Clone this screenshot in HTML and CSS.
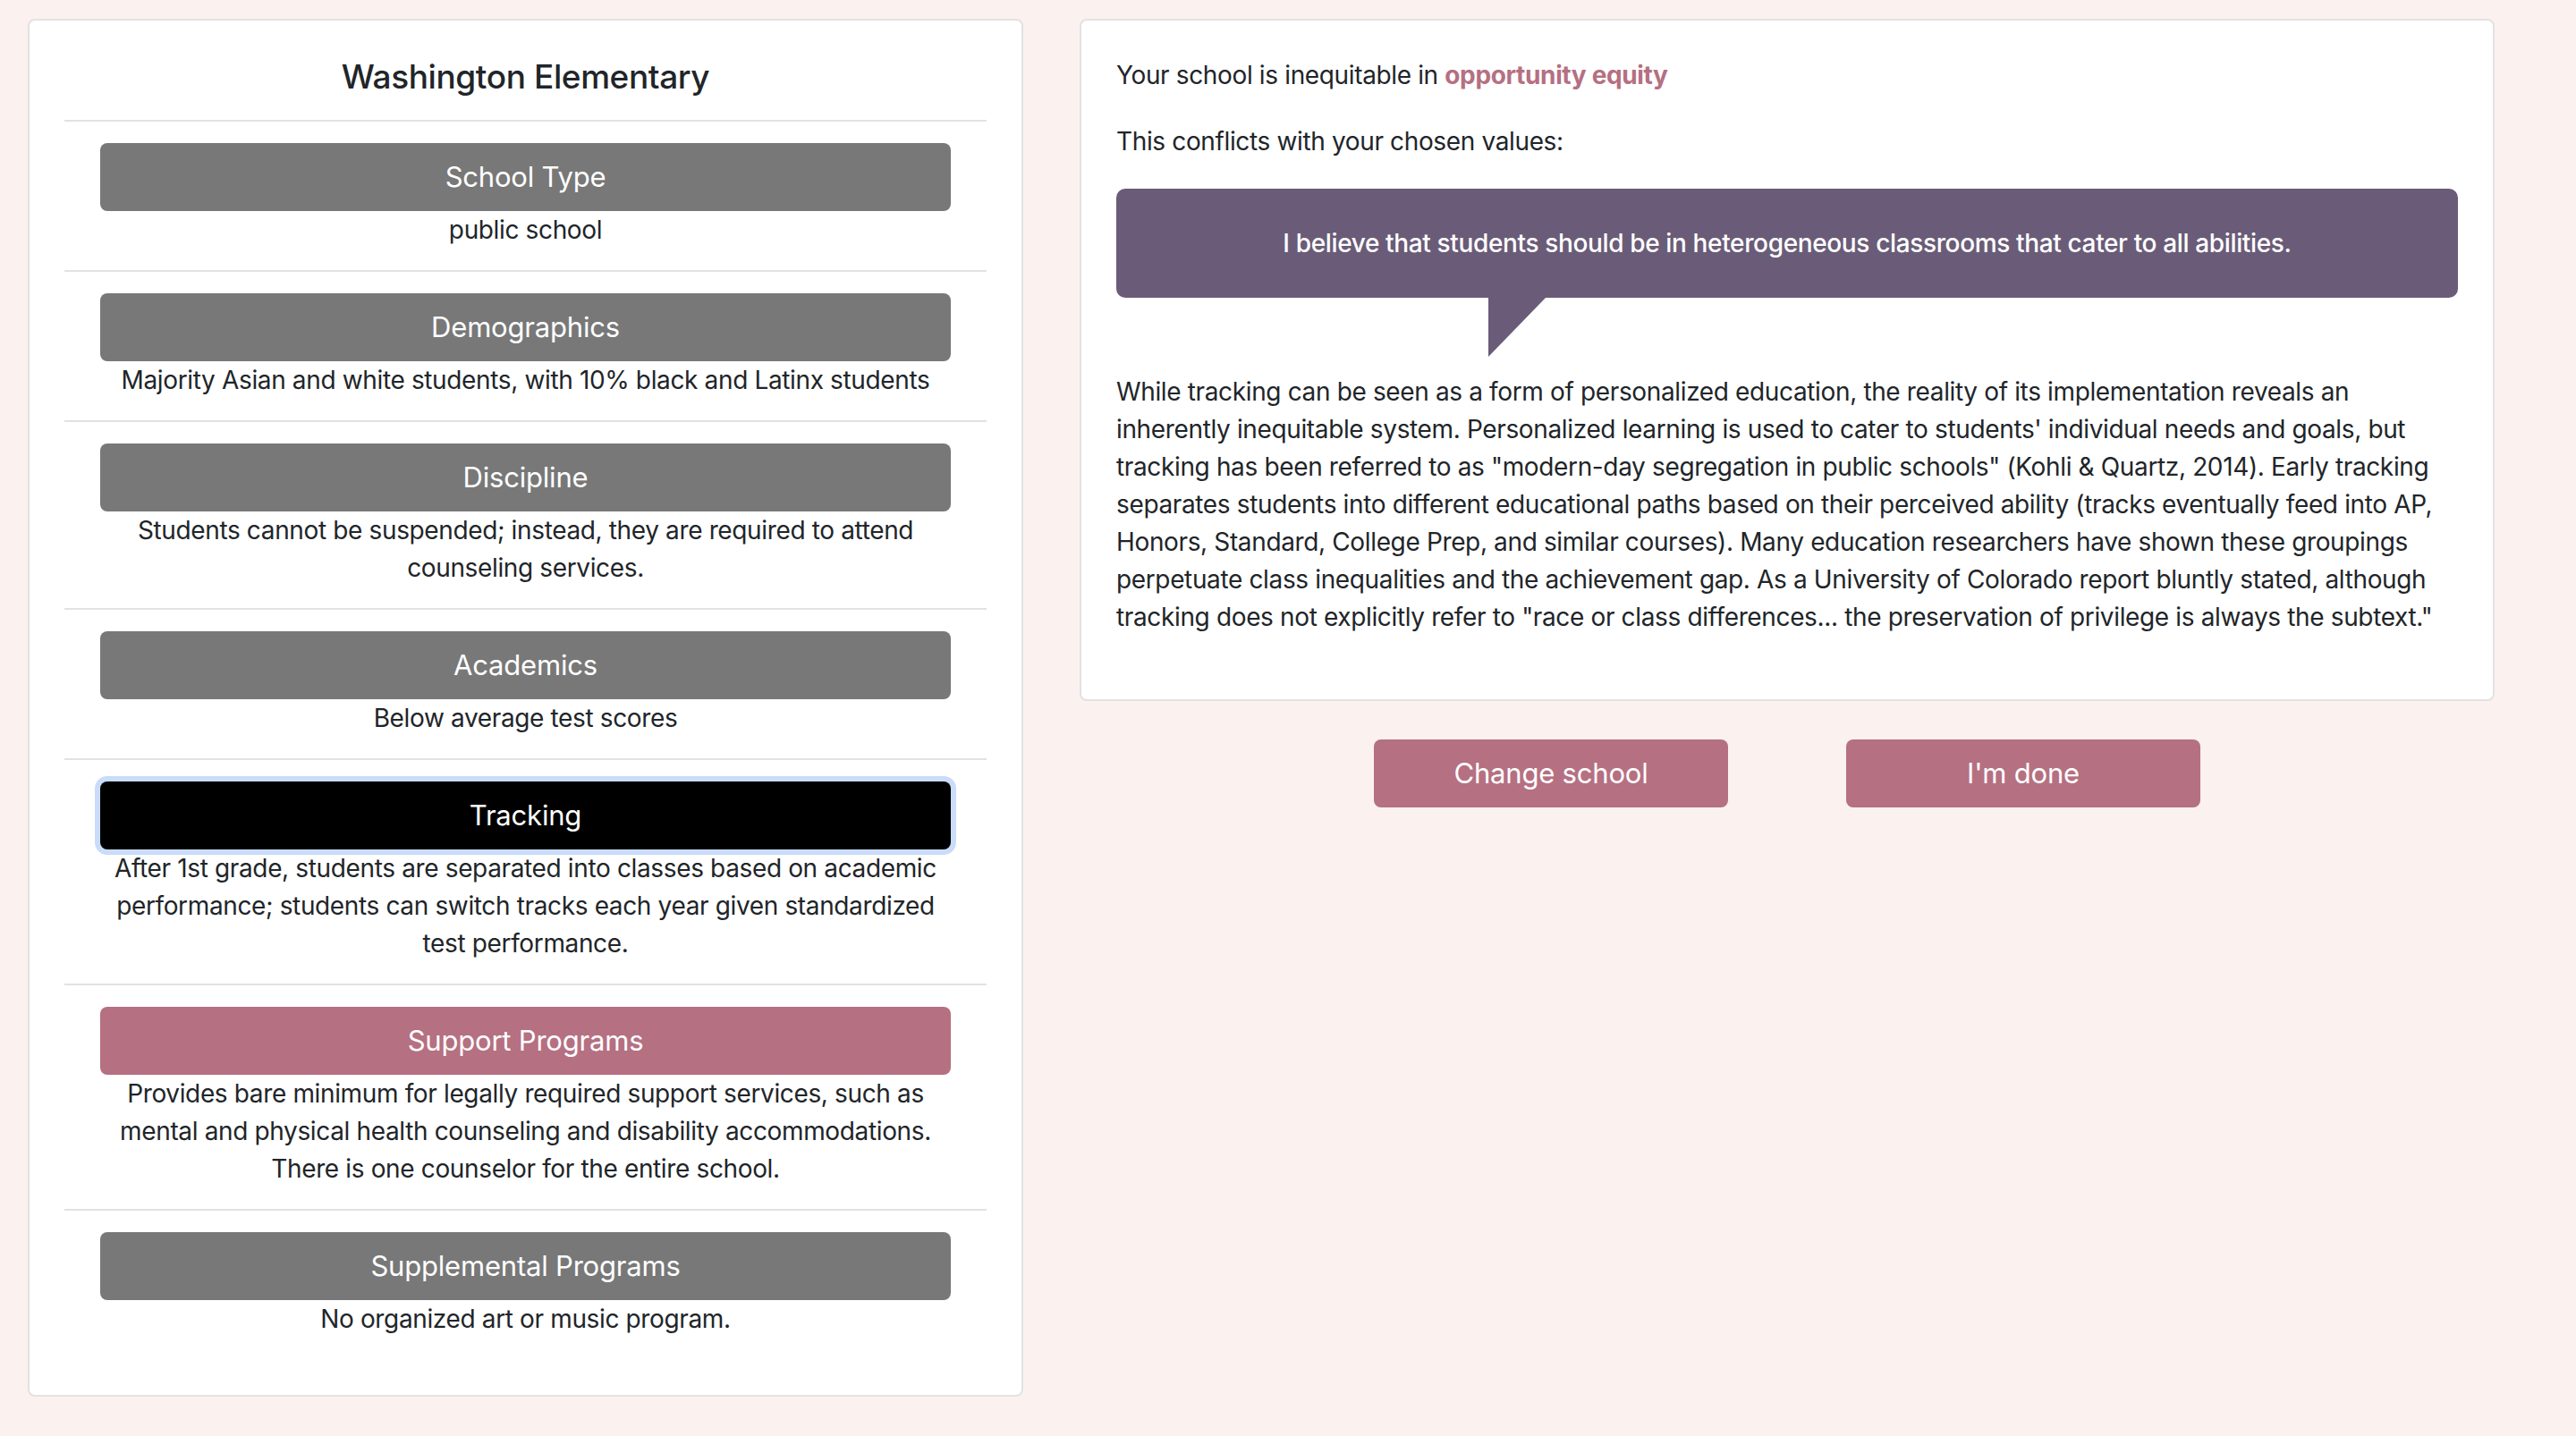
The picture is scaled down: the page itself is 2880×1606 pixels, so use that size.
FILE: index.html
```html
<!DOCTYPE html>
<html lang="en">
<head>
<meta charset="utf-8">
<title>Washington Elementary</title>
<link rel="stylesheet" href="styles.css">
</head>
<body>
<div class="page">
  <section class="card school">
    <h4 class="school-name">Washington Elementary</h4>
    <div class="item">
      <button class="cat">School Type</button>
      <p class="desc">public school</p>
    </div>
    <div class="item">
      <button class="cat">Demographics</button>
      <p class="desc">Majority Asian and white students, with 10% black and Latinx students</p>
    </div>
    <div class="item">
      <button class="cat">Discipline</button>
      <p class="desc">Students cannot be suspended; instead, they are required to attend<br>counseling services.</p>
    </div>
    <div class="item">
      <button class="cat">Academics</button>
      <p class="desc">Below average test scores</p>
    </div>
    <div class="item">
      <button class="cat active">Tracking</button>
      <p class="desc">After 1st grade, students are separated into classes based on academic<br>performance; students can switch tracks each year given standardized<br>test performance.</p>
    </div>
    <div class="item">
      <button class="cat flagged">Support Programs</button>
      <p class="desc">Provides bare minimum for legally required support services, such as<br>mental and physical health counseling and disability accommodations.<br>There is one counselor for the entire school.</p>
    </div>
    <div class="item">
      <button class="cat">Supplemental Programs</button>
      <p class="desc">No organized art or music program.</p>
    </div>
  </section>

  <div class="right">
    <section class="card feedback">
      <p class="lead-line">Your school is inequitable in <strong class="equity">opportunity equity</strong></p>
      <p class="lead-line">This conflicts with your chosen values:</p>
      <div class="bubble">
        I believe that students should be in heterogeneous classrooms that cater to all abilities.
        <span class="tail"></span>
      </div>
      <p class="explain">While tracking can be seen as a form of personalized education, the reality of its implementation reveals an<br>inherently inequitable system. Personalized learning is used to cater to students' individual needs and goals, but<br>tracking has been referred to as "modern-day segregation in public schools" (Kohli &amp; Quartz, 2014). Early tracking<br>separates students into different educational paths based on their perceived ability (tracks eventually feed into AP,<br>Honors, Standard, College Prep, and similar courses). Many education researchers have shown these groupings<br>perpetuate class inequalities and the achievement gap. As a University of Colorado report bluntly stated, although<br>tracking does not explicitly refer to "race or class differences... the preservation of privilege is always the subtext."</p>
    </section>
    <div class="actions">
      <button class="action">Change school</button>
      <button class="action">I'm done</button>
    </div>
  </div>
</div>
</body>
</html>
```

FILE: styles.css
```css
* { box-sizing: border-box; }

html, body {
  margin: 0;
  padding: 0;
}

body {
  background: #fbf1ef;
  font-family: Inter, "Noto Sans", "Liberation Sans", sans-serif;
  font-size: 28px;
  line-height: 42px;
  letter-spacing: -0.36px;
  color: #212529;
}

.page {
  display: flex;
  align-items: flex-start;
  gap: 63px;
  padding: 21px 0 0 31px;
}

.card {
  background: #fff;
  border: 2px solid #e2e2e2;
  border-radius: 8px;
}

.school {
  width: 1113px;
  padding: 39px 39px 40px;
}

.school-name {
  margin: 0 0 24px;
  font-size: 37px;
  line-height: 48px;
  font-weight: 500;
  letter-spacing: -0.4px;
  text-align: center;
  color: #212529;
}

.item {
  border-top: 2px solid #e2e2e2;
  padding: 24px 40px;
  text-align: center;
}

.cat {
  display: block;
  width: 100%;
  height: 76px;
  border: 0;
  border-radius: 8px;
  background: #787878;
  color: #fff;
  font-family: inherit;
  font-size: 31px;
  line-height: 40px;
  letter-spacing: -0.2px;
  padding: 0;
  cursor: pointer;
}

.cat.active {
  background: #000;
  box-shadow: 0 0 0 6px #c9dcf9;
}

.cat.flagged {
  background: #b57082;
}

.desc {
  margin: 0;
}

.right {
  width: 1582px;
  display: flex;
  flex-direction: column;
  align-items: stretch;
}

.feedback {
  padding: 40px 39px 39px;
}

.lead-line {
  margin: 0 0 32px;
}

.equity {
  color: #b57082;
  font-weight: 700;
}

.bubble {
  position: relative;
  background: #6a5c78;
  color: #fff;
  border-radius: 10px;
  padding: 40px 20px;
  text-align: center;
  font-weight: 500;
  margin: 0 0 84px;
}

.tail {
  position: absolute;
  left: 416px;
  top: 100%;
  width: 0;
  height: 0;
  border-top: 66px solid #6a5c78;
  border-right: 64px solid transparent;
}

.explain {
  margin: 0 0 32px;
  white-space: nowrap;
}

.actions {
  display: flex;
  justify-content: center;
  gap: 132px;
  margin-top: 43px;
}

.action {
  width: 396px;
  height: 76px;
  border: 0;
  border-radius: 8px;
  background: #b57082;
  color: #fff;
  font-family: inherit;
  font-size: 31px;
  line-height: 40px;
  letter-spacing: -0.2px;
  padding: 0;
}
```
